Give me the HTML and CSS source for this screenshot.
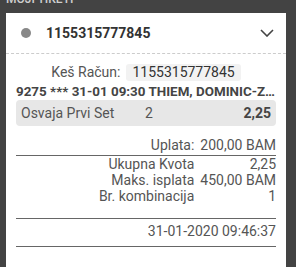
FILE: index.html
```html
<!DOCTYPE html>
<html>
<head>
<meta charset="utf-8">
<link rel="stylesheet" href="styles.css">
</head>
<body>
<div class="title"><span>Moji tiketi</span></div>
<div class="card">
  <div class="head">
    <span class="dot"></span>
    <span class="num">1155315777845</span>
    <svg class="chev" width="14" height="8" viewBox="0 0 14 8"><polyline points="1,1 7,7 13,1" fill="none" stroke="#444" stroke-width="1.6"/></svg>
  </div>
  <div class="body">
    <div class="cash"><span class="lbl">Keš Račun:</span><span class="box">1155315777845</span></div>
    <div class="event">9275 *** 31-01 09:30 THIEM, DOMINIC-ZVEREV, ALEXANDER</div>
    <div class="pick">
      <span class="pname">Osvaja Prvi Set</span>
      <span class="pcode">2</span>
      <span class="podd">2,25</span>
    </div>
    <div class="sum top">
      <span>Uplata:</span><span>200,00 BAM</span>
    </div>
    <div class="sum">
      <span>Ukupna Kvota</span><span>2,25</span>
      <span>Maks. isplata</span><span>450,00 BAM</span>
      <span>Br. kombinacija</span><span>1</span>
    </div>
    <div class="date">31-01-2020 09:46:37</div>
  </div>
</div>
</body>
</html>
```
FILE: styles.css
```css
html, body {
  margin: 0;
  padding: 0;
}
body {
  background: #434343;
  font-family: Roboto, "Liberation Sans", sans-serif;
  color: #555;
  height: 267px;
  overflow: hidden;
}
.title {
  height: 13px;
  overflow: hidden;
  padding-left: 6px;
}
.title span {
  display: block;
  margin-top: -7px;
  line-height: 13px;
  font-size: 12px;
  font-weight: 500;
  text-transform: uppercase;
  color: #cfcfcf;
}
.card {
  margin: 0 10px 0 6px;
  background: #fff;
  min-height: 254px;
}
.head {
  height: 40px;
  display: flex;
  align-items: center;
  padding: 0 12px 0 15px;
  border-bottom: 1px dashed #ccc;
}
.dot {
  width: 10px;
  height: 10px;
  border-radius: 50%;
  background: #888;
  margin-right: 15px;
}
.num {
  flex: 1;
  font-size: 14px;
  font-weight: 700;
  color: #333;
}
.chev {
  display: block;
}
.body {
  padding: 10px 10px 0 10px;
}
.cash {
  text-align: center;
  font-size: 14px;
  line-height: 17px;
  color: #555;
}
.box {
  display: inline-block;
  margin-left: 6px;
  padding: 0 6px;
  background: #f2f2f2;
  border-radius: 3px;
  color: #333;
}
.event {
  margin-top: 3px;
  font-size: 13.4px;
  font-weight: 700;
  color: #444;
  line-height: 16px;
  white-space: nowrap;
  overflow: hidden;
  text-overflow: ellipsis;
}
.pick {
  height: 26px;
  display: grid;
  grid-template-columns: 124px 1fr auto;
  align-items: center;
  padding: 0 5px;
  background: #e7e7e7;
  border-radius: 4px;
  font-size: 14px;
}
.podd {
  font-weight: 700;
  color: #444;
}
.sum {
  display: grid;
  grid-template-columns: 1fr auto;
  column-gap: 6px;
  text-align: right;
  font-size: 14px;
  line-height: 16px;
}
.sum.top {
  margin-top: 11px;
  padding-bottom: 2px;
  border-bottom: 1px solid #666;
}
.sum:not(.top) {
  padding-top: 0;
  padding-bottom: 14px;
  border-bottom: 1px solid #666;
}
.date {
  text-align: right;
  font-size: 14px;
  line-height: 16px;
  padding: 4px 0 7px;
  border-bottom: 1px solid #666;
}
```
